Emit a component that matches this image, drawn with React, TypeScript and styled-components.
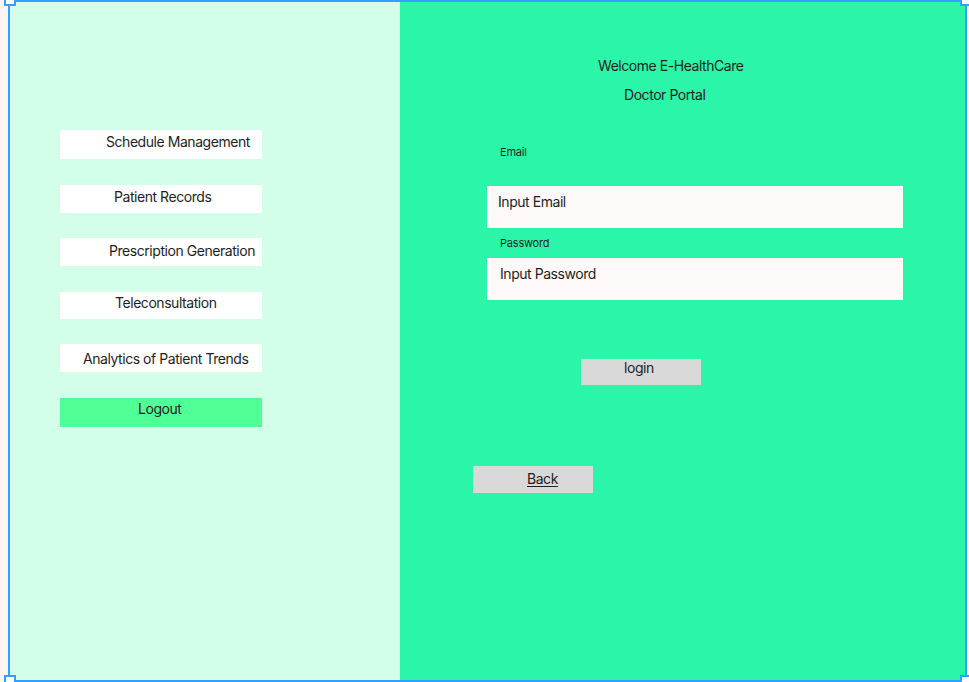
import styled, { createGlobalStyle } from 'styled-components'

const colors = {
    outside: '#fdf4f4',
    select: '#31a0ff',
    mint: '#d3fee9',
    green: '#2bf5a8',
    logout: '#50ff96',
    field: '#fdf9f8',
    grey: '#d9d9d9',
    text: '#1e1e1e',
}

const GlobalStyle = createGlobalStyle`
    html, body {
        margin: 0;
        padding: 0;
        overflow: hidden;
        background: ${colors.outside};
    }
    * {
        box-sizing: border-box;
    }
`

const Page = styled.div`
    height: 682px;
    padding-left: 8px;
    font-family: Inter, "Noto Sans", sans-serif;
    letter-spacing: -0.45px;
    color: ${colors.text};
`

const Frame = styled.div`
    position: relative;
    display: flex;
    width: 959px;
    height: 682px;
    border: 2px solid ${colors.select};
`

const Handle = styled.span<{ $x: 'left' | 'right'; $y: 'top' | 'bottom' }>`
    position: absolute;
    width: 12px;
    height: 12px;
    background: #fff;
    border: 2px solid ${colors.select};
    ${(p) => (p.$x === 'left' ? 'left: -6px;' : 'right: -7px;')}
    ${(p) => (p.$y === 'top' ? 'top: -8px;' : 'bottom: -7px;')}
`

const SidePanel = styled.aside`
    display: flex;
    flex-direction: column;
    align-items: flex-start;
    width: 390px;
    padding: 128px 0 0 50px;
    background: ${colors.mint};
    border-right: 1px solid #e4fff2;
`

const NavButton = styled.div<{ $indent: number; $top: number; $gap: number; $h: number; $active?: boolean }>`
    width: 202px;
    height: ${(p) => p.$h}px;
    margin-top: ${(p) => p.$gap}px;
    padding: ${(p) => p.$top}px 0 0 ${(p) => p.$indent}px;
    background: ${(p) => (p.$active ? colors.logout : '#fff')};
    font-size: 14px;
    line-height: 17px;
    white-space: nowrap;
`

const LoginPanel = styled.main`
    flex: 1;
    display: flex;
    flex-direction: column;
    align-items: flex-start;
    padding-top: 55px;
    background: ${colors.green};
`

const Heading = styled.div<{ $indent: number; $gap?: number }>`
    margin: ${(p) => p.$gap ?? 0}px 0 0 ${(p) => p.$indent}px;
    font-size: 14px;
    line-height: 17px;
`

const Label = styled.label<{ $gap: number }>`
    margin: ${(p) => p.$gap}px 0 0 100px;
    font-size: 11px;
    line-height: 13px;
    letter-spacing: -0.2px;
`

const Field = styled.div<{ $gap: number; $indent: number; $top: number }>`
    width: 416px;
    height: 42px;
    margin: ${(p) => p.$gap}px 0 0 87px;
    padding: ${(p) => p.$top}px 0 0 ${(p) => p.$indent}px;
    background: ${colors.field};
    font-size: 14px;
    line-height: 17px;
`

const GreyButton = styled.div<{ $x: number; $gap: number; $indent: number; $top: number; $h: number }>`
    width: 120px;
    height: ${(p) => p.$h}px;
    margin: ${(p) => p.$gap}px 0 0 ${(p) => p.$x}px;
    padding: ${(p) => p.$top}px 0 0 ${(p) => p.$indent}px;
    background: ${colors.grey};
    font-size: 14px;
    line-height: 17px;
`

const LinkText = styled.span`
    text-decoration: underline;
    text-underline-offset: 2px;
`

const navItems = [
    { label: 'Schedule Management', indent: 46, top: 3, gap: 0, h: 29 },
    { label: 'Patient Records', indent: 54, top: 3, gap: 26, h: 28 },
    { label: 'Prescription Generation', indent: 49, top: 4, gap: 25, h: 28 },
    { label: 'Teleconsultation', indent: 55, top: 2, gap: 26, h: 27 },
    { label: 'Analytics of Patient Trends', indent: 23, top: 6, gap: 25, h: 28 },
]

export default function App() {
    return (
        <>
            <GlobalStyle />
            <Page>
                <Frame>
                    <SidePanel>
                        {navItems.map((item) => (
                            <NavButton
                                key={item.label}
                                $indent={item.indent}
                                $top={item.top}
                                $gap={item.gap}
                                $h={item.h}
                            >
                                {item.label}
                            </NavButton>
                        ))}
                        <NavButton $indent={78} $top={2} $gap={26} $h={29} $active>
                            Logout
                        </NavButton>
                    </SidePanel>

                    <LoginPanel>
                        <Heading $indent={198}>Welcome E-HealthCare</Heading>
                        <Heading $indent={224} $gap={12}>Doctor Portal</Heading>

                        <Label $gap={43}>Email</Label>
                        <Field $gap={27} $indent={11} $top={7}>Input Email</Field>

                        <Label $gap={9}>Password</Label>
                        <Field $gap={8} $indent={13} $top={7}>Input Password</Field>

                        <GreyButton $x={181} $gap={59} $indent={43} $top={0} $h={26}>
                            login
                        </GreyButton>
                        <GreyButton $x={73} $gap={81} $indent={54} $top={4} $h={27}>
                            <LinkText>Back</LinkText>
                        </GreyButton>
                    </LoginPanel>

                    <Handle $x="left" $y="top" />
                    <Handle $x="right" $y="top" />
                    <Handle $x="left" $y="bottom" />
                    <Handle $x="right" $y="bottom" />
                </Frame>
            </Page>
        </>
    )
}
